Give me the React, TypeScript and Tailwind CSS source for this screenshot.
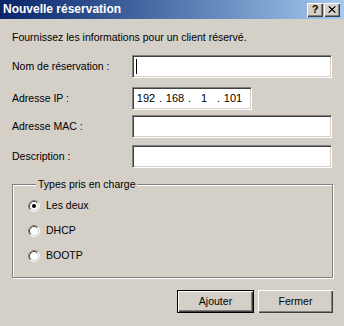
import React from 'react'

const sunken =
  'bg-white border border-t-[#808080] border-l-[#808080] border-b-white border-r-white shadow-[inset_1px_1px_0_#404040,inset_-1px_-1px_0_#d4d0c8]'
const raised =
  'bg-[#d4d0c8] shadow-[inset_1px_1px_0_#ffffff,inset_-1px_-1px_0_#404040,inset_-2px_-2px_0_#808080]'

function Radio({ checked }: { checked?: boolean }) {
  return (
    <svg width="12" height="12" viewBox="0 0 12 12" className="shrink-0">
      <circle cx="6" cy="6" r="5" fill="#fff" />
      <path d="M2.11 9.89 A5.5 5.5 0 0 1 9.89 2.11" stroke="#808080" fill="none" />
      <path d="M9.89 2.11 A5.5 5.5 0 0 1 2.11 9.89" stroke="#ffffff" fill="none" />
      <path d="M2.82 9.18 A4.5 4.5 0 0 1 9.18 2.82" stroke="#404040" fill="none" />
      <path d="M9.18 2.82 A4.5 4.5 0 0 1 2.82 9.18" stroke="#d4d0c8" fill="none" />
      {checked && <circle cx="6" cy="6" r="2" fill="#000" />}
    </svg>
  )
}

function Field({ label, className, children }: { label: string; className: string; children?: React.ReactNode }) {
  return (
    <div className={`flex items-center ${className}`}>
      <span className="w-[120px]">{label}</span>
      {children ?? <div className={`${sunken} w-[200px] h-[23px]`} />}
    </div>
  )
}

export default function App() {
  return (
    <div className="w-[344px] h-[326px] bg-[#d4d0c8] text-black text-[10.5px] leading-[13px] font-['Liberation_Sans',Arial,sans-serif] overflow-hidden">
      <div className="h-[19px] flex items-center justify-between pl-[3px] pr-[4px] bg-gradient-to-r from-[#0a246a] to-[#a6caf0]">
        <span className="text-white font-bold text-[12px]">Nouvelle réservation</span>
        <div className="flex gap-[1px]">
          <div className={`${raised} w-[16px] h-[14px] flex items-center justify-center font-bold text-[11px] leading-none`}>?</div>
          <div className={`${raised} w-[16px] h-[14px] flex items-center justify-center`}>
            <svg width="8" height="7" viewBox="0 0 8 7">
              <path d="M0.5 0.5 L7 6.5 M1.5 0.5 L7.5 6.5 M7 0.5 L0.5 6.5 M7.5 0.5 L1 6.5" stroke="#000" strokeWidth="1" />
            </svg>
          </div>
        </div>
      </div>

      <div className="pl-3 pr-3">
        <p className="mt-[12px]">Fournissez les informations pour un client réservé.</p>

        <Field label="Nom de réservation :" className="mt-[11px]">
          <div className={`${sunken} w-[200px] h-[23px] flex items-center pl-[3px]`}>
            <span className="w-[1px] h-[15px] bg-black" />
          </div>
        </Field>

        <Field label="Adresse IP :" className="mt-[9px]">
          <div className={`${sunken} w-[120px] h-[23px] flex items-center pl-[1px] text-[11px]`}>
            <span className="w-[24px] text-center">192</span>
            <span className="w-[5px] text-center">.</span>
            <span className="w-[24px] text-center">168</span>
            <span className="w-[5px] text-center">.</span>
            <span className="w-[24px] text-center">1</span>
            <span className="w-[5px] text-center">.</span>
            <span className="w-[24px] text-center">101</span>
          </div>
        </Field>

        <Field label="Adresse MAC :" className="mt-[5px]" />
        <Field label="Description :" className="mt-[7px]" />

        <fieldset className="mt-[10px] w-[321px] h-[100px] border border-[#808080] shadow-[inset_1px_1px_0_#fff,1px_1px_0_#fff] pl-[15px] pr-2">
          <legend className="ml-[8px] px-[2px] bg-[#d4d0c8]">Types pris en charge</legend>
          <div className="flex flex-col gap-[12px] mt-[8px]">
            <label className="flex items-center gap-[6px]">
              <Radio checked />
              <span>Les deux</span>
            </label>
            <label className="flex items-center gap-[6px]">
              <Radio />
              <span>DHCP</span>
            </label>
            <label className="flex items-center gap-[6px]">
              <Radio />
              <span>BOOTP</span>
            </label>
          </div>
        </fieldset>

        <div className="mt-[12px] flex justify-end gap-[4px] mr-[-1px]">
          <button className="w-[77px] h-[23px] border border-black bg-[#d4d0c8] shadow-[inset_1px_1px_0_#ffffff,inset_-1px_-1px_0_#404040,inset_-2px_-2px_0_#808080]">
            Ajouter
          </button>
          <button className={`${raised} w-[75px] h-[23px]`}>Fermer</button>
        </div>
      </div>
    </div>
  )
}
